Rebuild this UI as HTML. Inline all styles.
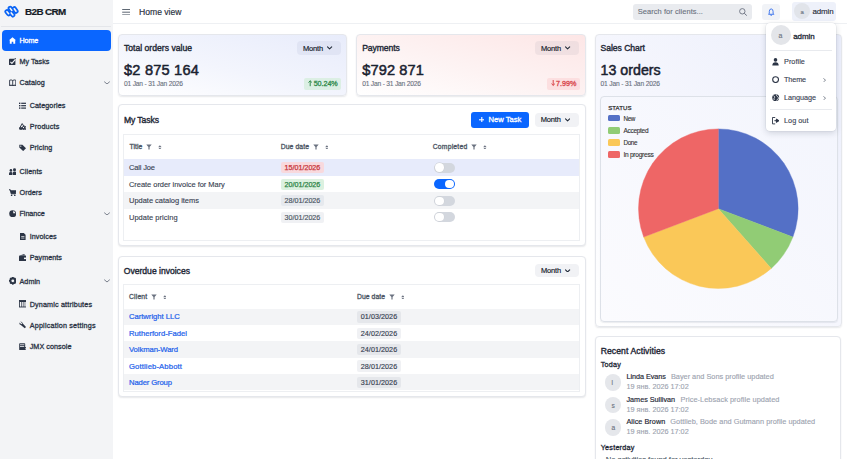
<!DOCTYPE html>
<html><head><meta charset="utf-8"><style>
html,body{margin:0;padding:0;}
body{width:847px;height:459px;overflow:hidden;position:relative;background:#ffffff;font-family:"Liberation Sans",sans-serif;}
.t{position:absolute;white-space:nowrap;}
</style></head><body>
<div style="position:absolute;left:0px;top:0px;width:113.4px;height:459px;background:#f3f4f6;"></div>
<div style="position:absolute;left:1px;top:26px;width:110px;height:1px;background:#e4e6ea;"></div>
<svg style="position:absolute;left:3px;top:3px" width="18" height="17" viewBox="0 0 486 459"><g stroke="#0a64f5" stroke-width="138" stroke-linecap="round"><line x1="108" y1="235" x2="152" y2="290"/><line x1="195" y1="145" x2="238" y2="200"/><line x1="222" y1="268" x2="268" y2="322"/><line x1="305" y1="155" x2="352" y2="222"/></g>
<g stroke="#f3f4f6" stroke-width="42" stroke-linecap="round"><line x1="108" y1="235" x2="152" y2="290"/><line x1="195" y1="145" x2="238" y2="200"/><line x1="222" y1="268" x2="268" y2="322"/><line x1="305" y1="155" x2="352" y2="222"/></g></svg>
<div class="t" style="left:25.00px;top:2.20px;font-size:9.86px;line-height:20px;color:#151b26;font-weight:700;-webkit-text-stroke:0.2px #151b26;letter-spacing:-0.603px;">B2B CRM</div>
<div style="position:absolute;left:1.5px;top:29.5px;width:109px;height:21px;background:#0a66ff;border-radius:4px;"></div>
<svg style="position:absolute;left:9px;top:37px" width="7" height="7" viewBox="0 0 7 7"><path d="M3.5 0.3 L7 3.3 L6.2 3.3 L6.2 6.8 L4.3 6.8 L4.3 4.8 L2.7 4.8 L2.7 6.8 L0.8 6.8 L0.8 3.3 L0 3.3 Z" fill="#fff"/></svg>
<div class="t" style="left:19.50px;top:30.80px;font-size:7.2px;line-height:20px;color:#ffffff;-webkit-text-stroke:0.3px #ffffff;letter-spacing:-0.102px;">Home</div>
<svg style="position:absolute;left:8.7px;top:57.8px" width="7" height="7.4" viewBox="0 0 7 7.4"><rect x="0" y="0.8" width="6.4" height="6.4" rx="0.8" fill="#2b3445"/><path d="M1.4 3.9 L2.9 5.4 L6.6 1.2" stroke="#f3f4f6" stroke-width="1.1" fill="none"/><path d="M5.2 0.2 L7 0.2 L7 1.6" fill="#2b3445"/></svg>
<div class="t" style="left:19.50px;top:52.10px;font-size:7.2px;line-height:20px;color:#2b3445;-webkit-text-stroke:0.3px #2b3445;">My Tasks</div>
<svg style="position:absolute;left:8.7px;top:78.89999999999999px" width="7.4" height="7.4" viewBox="0 0 7.4 7.4"><path d="M0.6 1.2 Q2.2 0.5 3.7 1.5 Q5.2 0.5 6.8 1.2 L6.8 6.4 Q5.2 5.8 3.7 6.6 Q2.2 5.8 0.6 6.4 Z M3.7 1.5 L3.7 6.6 M0.2 6.8 L7.2 6.8" stroke="#2b3445" stroke-width="0.9" fill="none"/></svg>
<div class="t" style="left:19.50px;top:73.20px;font-size:7.2px;line-height:20px;color:#2b3445;-webkit-text-stroke:0.3px #2b3445;letter-spacing:0.081px;">Catalog</div>
<svg style="position:absolute;left:103.8px;top:80.8px" width="6.0" height="3.6" viewBox="0 0 6.0 3.6"><path d="M0.5 0.9 L3.0 3.0 L5.5 0.9" stroke="#6b7280" stroke-width="0.9" fill="none" stroke-linecap="round" stroke-linejoin="round"/></svg>
<svg style="position:absolute;left:18.8px;top:101.5px" width="7.4" height="7.4" viewBox="0 0 7.4 7.4"><g fill="#2b3445"><rect x="0" y="0.6" width="1.4" height="1.4"/><rect x="0" y="3" width="1.4" height="1.4"/><rect x="0" y="5.4" width="1.4" height="1.4"/><rect x="2.2" y="0.7" width="5.2" height="1.2"/><rect x="2.2" y="3.1" width="5.2" height="1.2"/><rect x="2.2" y="5.5" width="5.2" height="1.2"/></g></svg>
<div class="t" style="left:29.70px;top:95.80px;font-size:7.2px;line-height:20px;color:#2b3445;-webkit-text-stroke:0.3px #2b3445;letter-spacing:0.098px;">Categories</div>
<svg style="position:absolute;left:18.8px;top:122.7px" width="7.4" height="7.4" viewBox="0 0 7.4 7.4"><g fill="none" stroke="#2b3445" stroke-width="1"><path d="M3.2 0.6 L6.2 5.6 L0.4 5.6 Z"/><circle cx="5.2" cy="5" r="1.9"/></g><rect x="0.5" y="4.2" width="2.6" height="2.6" fill="#2b3445"/></svg>
<div class="t" style="left:29.70px;top:117.00px;font-size:7.2px;line-height:20px;color:#2b3445;-webkit-text-stroke:0.3px #2b3445;letter-spacing:0.170px;">Products</div>
<svg style="position:absolute;left:18.8px;top:143.9px" width="7.6" height="7.4" viewBox="0 0 7.6 7.4"><path d="M0.3 0.8 L3.4 0.8 L7 4.3 L4.2 7.1 L0.3 3.4 Z" fill="#2b3445"/><circle cx="1.8" cy="2.2" r="0.6" fill="#f3f4f6"/></svg>
<div class="t" style="left:29.70px;top:138.20px;font-size:7.2px;line-height:20px;color:#2b3445;-webkit-text-stroke:0.3px #2b3445;letter-spacing:0.099px;">Pricing</div>
<svg style="position:absolute;left:8.7px;top:167.60000000000002px" width="7.6" height="7.4" viewBox="0 0 7.6 7.4"><g fill="#2b3445"><circle cx="1.9" cy="2.4" r="1.3"/><circle cx="5.5" cy="1.7" r="1.5"/><path d="M0 7.3 L0 5.2 Q0 4 1.9 4 Q3.4 4 3.4 5.2 L3.4 7.3 Z"/><path d="M3.9 7.3 L3.9 4.6 Q3.9 3.5 5.5 3.5 Q7.4 3.5 7.4 4.6 L7.4 7.3 Z"/></g></svg>
<div class="t" style="left:19.50px;top:161.90px;font-size:7.2px;line-height:20px;color:#2b3445;-webkit-text-stroke:0.3px #2b3445;letter-spacing:0.115px;">Clients</div>
<svg style="position:absolute;left:8.7px;top:189.0px" width="7.6" height="7.4" viewBox="0 0 7.6 7.4"><path d="M0 0.8 L1.3 0.8 L2.2 4.8 L6.4 4.8 L7.3 1.8 L1.8 1.8" stroke="#2b3445" stroke-width="1" fill="#2b3445"/><circle cx="2.6" cy="6.4" r="0.8" fill="#2b3445"/><circle cx="5.8" cy="6.4" r="0.8" fill="#2b3445"/></svg>
<div class="t" style="left:19.50px;top:183.30px;font-size:7.2px;line-height:20px;color:#2b3445;-webkit-text-stroke:0.3px #2b3445;letter-spacing:0.079px;">Orders</div>
<svg style="position:absolute;left:8.7px;top:210.0px" width="7.4" height="7.4" viewBox="0 0 7.4 7.4"><circle cx="3.7" cy="3.7" r="3.5" fill="#2b3445"/><path d="M4.2 3.2 L4.2 0.9 A2.6 2.6 0 0 1 6.5 3.2 Z" fill="#f3f4f6"/></svg>
<div class="t" style="left:19.50px;top:204.30px;font-size:7.2px;line-height:20px;color:#2b3445;-webkit-text-stroke:0.3px #2b3445;letter-spacing:-0.053px;">Finance</div>
<svg style="position:absolute;left:103.8px;top:211.89999999999998px" width="6.0" height="3.6" viewBox="0 0 6.0 3.6"><path d="M0.5 0.9 L3.0 3.0 L5.5 0.9" stroke="#6b7280" stroke-width="0.9" fill="none" stroke-linecap="round" stroke-linejoin="round"/></svg>
<svg style="position:absolute;left:19.6px;top:232.60000000000002px" width="6" height="7.4" viewBox="0 0 6 7.4"><path d="M0 0 L3.8 0 L5.6 1.8 L5.6 7.4 L0 7.4 Z" fill="#2b3445"/><rect x="1.2" y="3.2" width="3.2" height="0.7" fill="#f3f4f6"/><rect x="1.2" y="4.7" width="3.2" height="0.7" fill="#f3f4f6"/></svg>
<div class="t" style="left:29.70px;top:226.90px;font-size:7.2px;line-height:20px;color:#2b3445;-webkit-text-stroke:0.3px #2b3445;letter-spacing:0.084px;">Invoices</div>
<svg style="position:absolute;left:18.8px;top:253.8px" width="7.6" height="7.4" viewBox="0 0 7.6 7.4"><rect x="0" y="1.6" width="7.4" height="5.6" rx="0.8" fill="#2b3445"/><path d="M0.6 1.6 L5.4 0 L5.8 1.6" fill="#2b3445"/><rect x="5" y="3.6" width="2.4" height="1.5" fill="#f3f4f6"/></svg>
<div class="t" style="left:29.70px;top:248.10px;font-size:7.2px;line-height:20px;color:#2b3445;-webkit-text-stroke:0.3px #2b3445;letter-spacing:0.027px;">Payments</div>
<svg style="position:absolute;left:8.7px;top:277.2px" width="7.6" height="7.6" viewBox="0 0 7.6 7.6"><g transform="translate(3.8 3.8)"><circle r="2.8" fill="none" stroke="#2b3445" stroke-width="1.4"/><g fill="#2b3445"><rect x="-0.8" y="-3.8" width="1.6" height="7.6"/><rect x="-3.8" y="-0.8" width="7.6" height="1.6"/><rect x="-0.8" y="-3.8" width="1.6" height="7.6" transform="rotate(45)"/><rect x="-0.8" y="-3.8" width="1.6" height="7.6" transform="rotate(-45)"/></g><circle r="1.4" fill="#f3f4f6"/></g></svg>
<div class="t" style="left:19.50px;top:271.50px;font-size:7.2px;line-height:20px;color:#2b3445;-webkit-text-stroke:0.3px #2b3445;letter-spacing:0.048px;">Admin</div>
<svg style="position:absolute;left:103.8px;top:279.09999999999997px" width="6.0" height="3.6" viewBox="0 0 6.0 3.6"><path d="M0.5 0.9 L3.0 3.0 L5.5 0.9" stroke="#6b7280" stroke-width="0.9" fill="none" stroke-linecap="round" stroke-linejoin="round"/></svg>
<svg style="position:absolute;left:18.8px;top:300.2px" width="7.6" height="7.4" viewBox="0 0 7.6 7.4"><rect x="0.4" y="0.4" width="6.8" height="6.6" fill="none" stroke="#2b3445" stroke-width="0.9"/><rect x="0.4" y="0.4" width="6.8" height="1.6" fill="#2b3445"/><g stroke="#2b3445" stroke-width="0.8"><line x1="2.7" y1="1" x2="2.7" y2="7"/><line x1="4.9" y1="1" x2="4.9" y2="7"/></g></svg>
<div class="t" style="left:29.70px;top:294.50px;font-size:7.2px;line-height:20px;color:#2b3445;-webkit-text-stroke:0.3px #2b3445;letter-spacing:0.163px;">Dynamic attributes</div>
<svg style="position:absolute;left:18.8px;top:321.3px" width="7.6" height="7.4" viewBox="0 0 7.6 7.4"><path d="M1.2 0.4 L3.3 2.3 L2.4 3.3 L0.4 1.4 Q0 3.4 1.8 4 L5.8 7.2 L7 6 L3.8 2.6 Q3.4 0.4 1.2 0.4 Z" fill="#2b3445"/></svg>
<div class="t" style="left:29.70px;top:315.60px;font-size:7.2px;line-height:20px;color:#2b3445;-webkit-text-stroke:0.3px #2b3445;letter-spacing:0.203px;">Application settings</div>
<svg style="position:absolute;left:18.8px;top:342.5px" width="7.6" height="7.4" viewBox="0 0 7.6 7.4"><rect x="0.2" y="0.3" width="6" height="7" rx="0.8" fill="#2b3445"/><rect x="1" y="1.4" width="4.4" height="0.8" fill="#f3f4f6"/><rect x="1" y="3" width="4.4" height="0.8" fill="#f3f4f6"/><path d="M5.2 3.6 L7.4 5.2 L5.8 7" stroke="#2b3445" stroke-width="0.9" fill="none"/></svg>
<div class="t" style="left:29.70px;top:336.80px;font-size:7.2px;line-height:20px;color:#2b3445;-webkit-text-stroke:0.3px #2b3445;letter-spacing:0.058px;">JMX console</div>
<div style="position:absolute;left:113px;top:23px;width:734px;height:1px;background:#eef0f3;"></div>
<svg style="position:absolute;left:122px;top:9px" width="8.4" height="6.4" viewBox="0 0 8.4 6.4"><g stroke="#4b5563" stroke-width="0.9"><line x1="0.2" y1="0.5" x2="8.2" y2="0.5"/><line x1="0.2" y1="3.2" x2="8.2" y2="3.2"/><line x1="0.2" y1="5.9" x2="8.2" y2="5.9"/></g></svg>
<div class="t" style="left:139.00px;top:2.40px;font-size:8.6px;line-height:20px;color:#262e3b;-webkit-text-stroke:0.15px #262e3b;">Home view</div>
<div style="position:absolute;left:633px;top:3.5px;width:119px;height:16px;background:#e9ebef;border-radius:3px;"></div>
<div class="t" style="left:637.70px;top:2.40px;font-size:7.49px;line-height:20px;color:#6b7280;-webkit-text-stroke:0.12px #6b7280;letter-spacing:0.060px;">Search for clients...</div>
<svg style="position:absolute;left:739px;top:8px" width="8.5" height="8" viewBox="0 0 8.5 8"><circle cx="3.3" cy="3.3" r="2.7" stroke="#6b7280" stroke-width="0.9" fill="none"/><line x1="5.3" y1="5.3" x2="7.8" y2="7.6" stroke="#6b7280" stroke-width="1"/></svg>
<div style="position:absolute;left:762px;top:3.5px;width:18.3px;height:16px;background:#f1f3f7;border-radius:3px;"></div>
<svg style="position:absolute;left:768.2px;top:7.8px" width="6.4" height="8" viewBox="0 0 6.4 8"><path d="M3.2 0.9 Q1.3 1.1 1.3 3.5 L1.3 5.3 L0.5 6.3 L5.9 6.3 L5.1 5.3 L5.1 3.5 Q5.1 1.1 3.2 0.9 Z" stroke="#2563eb" stroke-width="0.85" fill="none"/><path d="M2.4 7.1 Q3.2 7.9 4.0 7.1" stroke="#2563eb" stroke-width="0.8" fill="none"/></svg>
<div style="position:absolute;left:792px;top:2px;width:44px;height:19px;background:#eef1fa;border-radius:3px;"></div>
<div style="position:absolute;left:794.2px;top:3.2px;width:16px;height:16px;background:#e1e4ea;border-radius:50%;"></div>
<div class="t" style="left:800.40px;top:2.20px;font-size:5.99px;line-height:20px;color:#6b7280;-webkit-text-stroke:0.12px #6b7280;">a</div>
<div class="t" style="left:812.40px;top:2.40px;font-size:8px;line-height:20px;color:#1f2937;-webkit-text-stroke:0.12px #1f2937;letter-spacing:-0.147px;">admin</div>
<div style="position:absolute;border:1px solid #e5e7ec;border-radius:4px;box-shadow:0 1px 1.5px rgba(30,40,60,0.10);box-sizing:border-box;left:118px;top:34px;width:229px;height:61.5px;background:linear-gradient(to top right,#ffffff 0%,#f3f5fd 45%,#e8ecfb 100%);"></div>
<div class="t" style="left:124.00px;top:38.00px;font-size:8.6px;line-height:20px;color:#1f2937;-webkit-text-stroke:0.38px #1f2937;letter-spacing:0.007px;">Total orders value</div>
<div class="t" style="left:124.00px;top:59.90px;font-size:14.6px;line-height:20px;color:#1a2230;-webkit-text-stroke:0.5px #1a2230;letter-spacing:0.203px;">$2 875 164</div>
<div class="t" style="left:124.00px;top:74.20px;font-size:6.69px;line-height:20px;color:#6b7280;-webkit-text-stroke:0.12px #6b7280;letter-spacing:-0.208px;">01 Jan - 31 Jan 2026</div>
<div style="position:absolute;left:297px;top:41.3px;width:44px;height:13.4px;background:rgba(210,216,235,0.45);border-radius:4px;"></div>
<div class="t" style="left:303.00px;top:38.60px;font-size:7.49px;line-height:20px;color:#111827;-webkit-text-stroke:0.15px #111827;letter-spacing:-0.154px;">Month</div>
<svg style="position:absolute;left:327.4px;top:46.300000000000004px" width="5.199999999999999" height="3.6" viewBox="0 0 5.199999999999999 3.6"><path d="M0.5 0.9 L2.5999999999999996 3.0 L4.699999999999999 0.9" stroke="#1f2937" stroke-width="1.05" fill="none" stroke-linecap="round" stroke-linejoin="round"/></svg>
<div style="position:absolute;left:304px;top:78px;width:37px;height:11.5px;background:#dcefe4;border-radius:2px;"></div>
<svg style="position:absolute;left:308.2px;top:80.4px" width="4.4" height="6.2" viewBox="0 0 4.4 6.2"><path d="M2.2 0.8 L2.2 6.2 M0.5 2.5 L2.2 0.8 L3.9 2.5" stroke="#2f8a4b" stroke-width="1.0" fill="none"/></svg>
<div class="t" style="left:313.70px;top:74.40px;font-size:7.2px;line-height:20px;color:#2f8a4b;-webkit-text-stroke:0.3px #2f8a4b;letter-spacing:-0.064px;">50.24%</div>
<div style="position:absolute;border:1px solid #e5e7ec;border-radius:4px;box-shadow:0 1px 1.5px rgba(30,40,60,0.10);box-sizing:border-box;left:356px;top:34px;width:229.70000000000005px;height:61.5px;background:linear-gradient(to top right,#ffffff 0%,#fdf3f3 45%,#fde6e6 100%);"></div>
<div class="t" style="left:362.20px;top:38.00px;font-size:8.6px;line-height:20px;color:#1f2937;-webkit-text-stroke:0.38px #1f2937;letter-spacing:-0.077px;">Payments</div>
<div class="t" style="left:362.20px;top:59.90px;font-size:14.6px;line-height:20px;color:#1a2230;-webkit-text-stroke:0.5px #1a2230;letter-spacing:0.129px;">$792 871</div>
<div class="t" style="left:362.20px;top:74.20px;font-size:6.69px;line-height:20px;color:#6b7280;-webkit-text-stroke:0.12px #6b7280;letter-spacing:-0.214px;">01 Jan - 31 Jan 2026</div>
<div style="position:absolute;left:535px;top:41.3px;width:44px;height:13.4px;background:rgba(225,210,215,0.45);border-radius:4px;"></div>
<div class="t" style="left:541.00px;top:38.60px;font-size:7.49px;line-height:20px;color:#111827;-webkit-text-stroke:0.15px #111827;letter-spacing:-0.154px;">Month</div>
<svg style="position:absolute;left:565.4px;top:46.300000000000004px" width="5.199999999999999" height="3.6" viewBox="0 0 5.199999999999999 3.6"><path d="M0.5 0.9 L2.5999999999999996 3.0 L4.699999999999999 0.9" stroke="#1f2937" stroke-width="1.05" fill="none" stroke-linecap="round" stroke-linejoin="round"/></svg>
<div style="position:absolute;left:547.3px;top:78px;width:32.5px;height:11.5px;background:#fcdfe0;border-radius:2px;"></div>
<svg style="position:absolute;left:551.4px;top:80.4px" width="4.4" height="6.2" viewBox="0 0 4.4 6.2"><path d="M2.2 0 L2.2 5.4 M0.5 3.7 L2.2 5.4 L3.9 3.7" stroke="#d8454a" stroke-width="1.0" fill="none"/></svg>
<div class="t" style="left:555.90px;top:74.40px;font-size:7.2px;line-height:20px;color:#d8454a;-webkit-text-stroke:0.3px #d8454a;">7.99%</div>
<div style="position:absolute;border:1px solid #e5e7ec;border-radius:4px;box-shadow:0 1px 1.5px rgba(30,40,60,0.10);box-sizing:border-box;left:595px;top:33.6px;width:247.29999999999995px;height:293.59999999999997px;background:linear-gradient(to top right,#ffffff 0%,#f5f6fd 50%,#eceffc 100%);"></div>
<div class="t" style="left:600.50px;top:38.00px;font-size:8.6px;line-height:20px;color:#1f2937;-webkit-text-stroke:0.38px #1f2937;letter-spacing:-0.043px;">Sales Chart</div>
<div class="t" style="left:600.50px;top:59.90px;font-size:14.2px;line-height:20px;color:#1a2230;-webkit-text-stroke:0.5px #1a2230;letter-spacing:0.026px;">13 orders</div>
<div class="t" style="left:600.50px;top:74.20px;font-size:6.69px;line-height:20px;color:#6b7280;-webkit-text-stroke:0.12px #6b7280;letter-spacing:-0.177px;">01 Jan - 31 Jan 2026</div>
<div style="position:absolute;left:599.6px;top:95.8px;width:238px;height:226.5px;border:1px solid #dde1e8;border-radius:4px;box-sizing:border-box;background:linear-gradient(to top right,#fbfbfe,#f3f5fd);box-shadow:0 1px 1px rgba(30,40,60,0.08);"></div>
<div class="t" style="left:608.20px;top:97.90px;font-size:6.0px;line-height:20px;color:#333;-webkit-text-stroke:0.25px #333;letter-spacing:0.084px;">STATUS</div>
<div style="position:absolute;left:608.3px;top:114.7px;width:12.2px;height:6.6px;background:#5470c6;border-radius:1.5px;"></div>
<div class="t" style="left:623.40px;top:108.60px;font-size:6.28px;line-height:20px;color:#333;-webkit-text-stroke:0.12px #333;letter-spacing:-0.282px;">New</div>
<div style="position:absolute;left:608.3px;top:126.95px;width:12.2px;height:6.6px;background:#91cc75;border-radius:1.5px;"></div>
<div class="t" style="left:623.40px;top:120.85px;font-size:6.51px;line-height:20px;color:#333;-webkit-text-stroke:0.12px #333;letter-spacing:-0.278px;">Accepted</div>
<div style="position:absolute;left:608.3px;top:139.2px;width:12.2px;height:6.6px;background:#fac858;border-radius:1.5px;"></div>
<div class="t" style="left:623.40px;top:133.10px;font-size:6.29px;line-height:20px;color:#333;-webkit-text-stroke:0.12px #333;letter-spacing:-0.279px;">Done</div>
<div style="position:absolute;left:608.3px;top:151.45px;width:12.2px;height:6.6px;background:#ee6666;border-radius:1.5px;"></div>
<div class="t" style="left:623.40px;top:145.35px;font-size:6.63px;line-height:20px;color:#333;-webkit-text-stroke:0.12px #333;letter-spacing:-0.277px;">In progress</div>
<svg style="position:absolute;left:0;top:0" width="847" height="459"><path d="M718.3 208.7 L718.30 128.90 A79.8 79.8 0 0 1 792.91 237.00 Z" fill="#5470c6" stroke="#5470c6" stroke-width="0.4" stroke-linejoin="round"/><path d="M718.3 208.7 L792.91 237.00 A79.8 79.8 0 0 1 771.22 268.43 Z" fill="#91cc75" stroke="#91cc75" stroke-width="0.4" stroke-linejoin="round"/><path d="M718.3 208.7 L771.22 268.43 A79.8 79.8 0 0 1 643.69 237.00 Z" fill="#fac858" stroke="#fac858" stroke-width="0.4" stroke-linejoin="round"/><path d="M718.3 208.7 L643.69 237.00 A79.8 79.8 0 0 1 718.30 128.90 Z" fill="#ee6666" stroke="#ee6666" stroke-width="0.4" stroke-linejoin="round"/></svg>
<div style="position:absolute;border:1px solid #e5e7ec;border-radius:4px;box-shadow:0 1px 1.5px rgba(30,40,60,0.10);box-sizing:border-box;left:118px;top:103.8px;width:467.5px;height:142.7px;background:#fff;"></div>
<div class="t" style="left:123.90px;top:110.00px;font-size:8.6px;line-height:20px;color:#1f2937;-webkit-text-stroke:0.38px #1f2937;letter-spacing:-0.083px;">My Tasks</div>
<div style="position:absolute;left:471px;top:111.7px;width:57.8px;height:15.9px;background:#0a66ff;border-radius:3px;"></div>
<svg style="position:absolute;left:478.8px;top:116.6px" width="5.6" height="5.6" viewBox="0 0 5.6 5.6"><g stroke="#fff" stroke-width="1.1"><line x1="2.8" y1="0" x2="2.8" y2="5.6"/><line x1="0" y1="2.8" x2="5.6" y2="2.8"/></g></svg>
<div class="t" style="left:488.60px;top:110.20px;font-size:7.6px;line-height:20px;color:#ffffff;-webkit-text-stroke:0.3px #ffffff;">New Task</div>
<div style="position:absolute;left:534.7px;top:112.7px;width:44.3px;height:14.3px;background:#f1f2f5;border-radius:4px;"></div>
<div class="t" style="left:540.70px;top:110.45px;font-size:7.49px;line-height:20px;color:#111827;-webkit-text-stroke:0.15px #111827;letter-spacing:-0.154px;">Month</div>
<svg style="position:absolute;left:565.1px;top:118.14999999999999px" width="5.199999999999999" height="3.6" viewBox="0 0 5.199999999999999 3.6"><path d="M0.5 0.9 L2.5999999999999996 3.0 L4.699999999999999 0.9" stroke="#1f2937" stroke-width="1.05" fill="none" stroke-linecap="round" stroke-linejoin="round"/></svg>
<div style="position:absolute;left:123.3px;top:134.3px;width:456.5px;height:107px;border:1px solid #edeff2;box-sizing:border-box;background:#fff;"></div>
<div class="t" style="left:129.40px;top:136.90px;font-size:6.8px;line-height:20px;color:#4b5563;-webkit-text-stroke:0.3px #4b5563;letter-spacing:0.101px;">Title</div>
<svg style="position:absolute;left:146.4px;top:143.6px" width="6" height="6" viewBox="0 0 6 6"><path d="M0.3 0.6 L5.7 0.6 L3.6 3 L3.6 5.6 L2.4 5.6 L2.4 3 Z" fill="#6b7280"/></svg>
<svg style="position:absolute;left:158.0px;top:144.6px" width="3.8" height="4.8" viewBox="0 0 3.8 4.8"><path d="M1.9 0.3 L3.5 2.1 L0.3 2.1 Z M1.9 4.5 L3.5 2.7 L0.3 2.7 Z" fill="#6b7280"/></svg>
<div class="t" style="left:280.70px;top:136.90px;font-size:6.8px;line-height:20px;color:#4b5563;-webkit-text-stroke:0.3px #4b5563;letter-spacing:0.100px;">Due date</div>
<svg style="position:absolute;left:313px;top:143.6px" width="6" height="6" viewBox="0 0 6 6"><path d="M0.3 0.6 L5.7 0.6 L3.6 3 L3.6 5.6 L2.4 5.6 L2.4 3 Z" fill="#6b7280"/></svg>
<svg style="position:absolute;left:324.7px;top:144.6px" width="3.8" height="4.8" viewBox="0 0 3.8 4.8"><path d="M1.9 0.3 L3.5 2.1 L0.3 2.1 Z M1.9 4.5 L3.5 2.7 L0.3 2.7 Z" fill="#6b7280"/></svg>
<div class="t" style="left:432.70px;top:136.90px;font-size:6.8px;line-height:20px;color:#4b5563;-webkit-text-stroke:0.3px #4b5563;letter-spacing:0.202px;">Completed</div>
<svg style="position:absolute;left:471px;top:143.6px" width="6" height="6" viewBox="0 0 6 6"><path d="M0.3 0.6 L5.7 0.6 L3.6 3 L3.6 5.6 L2.4 5.6 L2.4 3 Z" fill="#6b7280"/></svg>
<svg style="position:absolute;left:483.0px;top:144.6px" width="3.8" height="4.8" viewBox="0 0 3.8 4.8"><path d="M1.9 0.3 L3.5 2.1 L0.3 2.1 Z M1.9 4.5 L3.5 2.7 L0.3 2.7 Z" fill="#6b7280"/></svg>
<div style="position:absolute;left:124.3px;top:159.2px;width:454.5px;height:16.6px;background:#e7ebfb;"></div>
<div class="t" style="left:129.00px;top:158.10px;font-size:7.49px;line-height:20px;color:#374151;-webkit-text-stroke:0.12px #374151;letter-spacing:-0.151px;">Call Joe</div>
<div style="position:absolute;left:280.7px;top:161.9px;width:43.5px;height:11.3px;background:#f8d9dd;border-radius:2px;"></div>
<div class="t" style="left:284.50px;top:158.10px;font-size:7.17px;line-height:20px;color:#c8363c;-webkit-text-stroke:0.25px #c8363c;">15/01/2026</div>
<div style="position:absolute;left:434.4px;top:162.5px;width:20.2px;height:10.2px;background:#d3d7de;border-radius:5.1px;"></div>
<div style="position:absolute;left:435.3px;top:163.3px;width:8.4px;height:8.4px;background:#fff;border-radius:50%;box-shadow:0 0 0 0.4px #c9ccd2;"></div>
<div style="position:absolute;left:124.3px;top:175.8px;width:454.5px;height:16.6px;background:#ffffff;"></div>
<div class="t" style="left:129.00px;top:174.70px;font-size:7.49px;line-height:20px;color:#374151;-webkit-text-stroke:0.12px #374151;letter-spacing:-0.039px;">Create order invoice for Mary</div>
<div style="position:absolute;left:280.7px;top:178.5px;width:43.5px;height:11.3px;background:#dcf1e0;border-radius:2px;"></div>
<div class="t" style="left:284.50px;top:174.70px;font-size:7.17px;line-height:20px;color:#2c8446;-webkit-text-stroke:0.25px #2c8446;">20/01/2026</div>
<div style="position:absolute;left:434.4px;top:179.1px;width:20.2px;height:10.2px;background:#0a66ff;border-radius:5.1px;"></div>
<div style="position:absolute;left:445.2px;top:180.0px;width:8.4px;height:8.4px;background:#fff;border-radius:50%;"></div>
<div style="position:absolute;left:124.3px;top:192.4px;width:454.5px;height:16.6px;background:#f3f4f6;"></div>
<div class="t" style="left:129.00px;top:191.30px;font-size:7.49px;line-height:20px;color:#374151;-webkit-text-stroke:0.12px #374151;letter-spacing:-0.019px;">Update catalog items</div>
<div style="position:absolute;left:280.7px;top:195.1px;width:43.5px;height:11.3px;background:#e6e9ee;border-radius:2px;"></div>
<div class="t" style="left:284.50px;top:191.30px;font-size:7.17px;line-height:20px;color:#4b5563;-webkit-text-stroke:0.15px #4b5563;">28/01/2026</div>
<div style="position:absolute;left:434.4px;top:195.7px;width:20.2px;height:10.2px;background:#d3d7de;border-radius:5.1px;"></div>
<div style="position:absolute;left:435.3px;top:196.5px;width:8.4px;height:8.4px;background:#fff;border-radius:50%;box-shadow:0 0 0 0.4px #c9ccd2;"></div>
<div style="position:absolute;left:124.3px;top:209.0px;width:454.5px;height:16.6px;background:#ffffff;"></div>
<div class="t" style="left:129.00px;top:207.90px;font-size:7.49px;line-height:20px;color:#374151;-webkit-text-stroke:0.12px #374151;letter-spacing:0.023px;">Update pricing</div>
<div style="position:absolute;left:280.7px;top:211.7px;width:43.5px;height:11.3px;background:#f0f1f4;border-radius:2px;"></div>
<div class="t" style="left:284.50px;top:207.90px;font-size:7.17px;line-height:20px;color:#4b5563;-webkit-text-stroke:0.15px #4b5563;">30/01/2026</div>
<div style="position:absolute;left:434.4px;top:212.3px;width:20.2px;height:10.2px;background:#d3d7de;border-radius:5.1px;"></div>
<div style="position:absolute;left:435.3px;top:213.1px;width:8.4px;height:8.4px;background:#fff;border-radius:50%;box-shadow:0 0 0 0.4px #c9ccd2;"></div>
<div style="position:absolute;border:1px solid #e5e7ec;border-radius:4px;box-shadow:0 1px 1.5px rgba(30,40,60,0.10);box-sizing:border-box;left:118px;top:256.2px;width:467.5px;height:141.10000000000002px;background:#fff;"></div>
<div class="t" style="left:123.80px;top:261.20px;font-size:8.6px;line-height:20px;color:#1f2937;-webkit-text-stroke:0.38px #1f2937;letter-spacing:-0.016px;">Overdue invoices</div>
<div style="position:absolute;left:535px;top:263.6px;width:44px;height:13.8px;background:#f1f2f5;border-radius:4px;"></div>
<div class="t" style="left:541.00px;top:261.10px;font-size:7.49px;line-height:20px;color:#111827;-webkit-text-stroke:0.15px #111827;letter-spacing:-0.154px;">Month</div>
<svg style="position:absolute;left:565.4px;top:268.8px" width="5.199999999999999" height="3.6" viewBox="0 0 5.199999999999999 3.6"><path d="M0.5 0.9 L2.5999999999999996 3.0 L4.699999999999999 0.9" stroke="#1f2937" stroke-width="1.05" fill="none" stroke-linecap="round" stroke-linejoin="round"/></svg>
<div style="position:absolute;left:123.3px;top:284.2px;width:456.5px;height:108px;border:1px solid #edeff2;box-sizing:border-box;background:#fff;"></div>
<div class="t" style="left:129.00px;top:286.90px;font-size:6.8px;line-height:20px;color:#4b5563;-webkit-text-stroke:0.3px #4b5563;letter-spacing:0.163px;">Client</div>
<svg style="position:absolute;left:150.8px;top:293.6px" width="6" height="6" viewBox="0 0 6 6"><path d="M0.3 0.6 L5.7 0.6 L3.6 3 L3.6 5.6 L2.4 5.6 L2.4 3 Z" fill="#6b7280"/></svg>
<svg style="position:absolute;left:162.5px;top:294.6px" width="3.8" height="4.8" viewBox="0 0 3.8 4.8"><path d="M1.9 0.3 L3.5 2.1 L0.3 2.1 Z M1.9 4.5 L3.5 2.7 L0.3 2.7 Z" fill="#6b7280"/></svg>
<div class="t" style="left:357.00px;top:286.90px;font-size:6.8px;line-height:20px;color:#4b5563;-webkit-text-stroke:0.3px #4b5563;letter-spacing:0.057px;">Due date</div>
<svg style="position:absolute;left:389px;top:293.6px" width="6" height="6" viewBox="0 0 6 6"><path d="M0.3 0.6 L5.7 0.6 L3.6 3 L3.6 5.6 L2.4 5.6 L2.4 3 Z" fill="#6b7280"/></svg>
<svg style="position:absolute;left:400.7px;top:294.6px" width="3.8" height="4.8" viewBox="0 0 3.8 4.8"><path d="M1.9 0.3 L3.5 2.1 L0.3 2.1 Z M1.9 4.5 L3.5 2.7 L0.3 2.7 Z" fill="#6b7280"/></svg>
<div style="position:absolute;left:124.3px;top:308.7px;width:454.5px;height:16.36px;background:#f3f4f6;"></div>
<div class="t" style="left:129.00px;top:307.48px;font-size:7.7px;line-height:20px;color:#2563eb;-webkit-text-stroke:0.22px #2563eb;letter-spacing:-0.042px;">Cartwright LLC</div>
<div style="position:absolute;left:357px;top:311.18px;width:44px;height:11.5px;background:#e5e7eb;border-radius:2px;"></div>
<div class="t" style="left:360.80px;top:307.48px;font-size:7.17px;line-height:20px;color:#374151;-webkit-text-stroke:0.15px #374151;letter-spacing:0.057px;">01/03/2026</div>
<div style="position:absolute;left:124.3px;top:325.06px;width:454.5px;height:16.36px;background:#ffffff;"></div>
<div class="t" style="left:129.00px;top:323.84px;font-size:7.7px;line-height:20px;color:#2563eb;-webkit-text-stroke:0.22px #2563eb;letter-spacing:-0.014px;">Rutherford-Fadel</div>
<div style="position:absolute;left:357px;top:327.54px;width:44px;height:11.5px;background:#f0f1f4;border-radius:2px;"></div>
<div class="t" style="left:360.80px;top:323.84px;font-size:7.17px;line-height:20px;color:#374151;-webkit-text-stroke:0.15px #374151;letter-spacing:0.057px;">24/02/2026</div>
<div style="position:absolute;left:124.3px;top:341.42px;width:454.5px;height:16.36px;background:#f3f4f6;"></div>
<div class="t" style="left:129.00px;top:340.20px;font-size:7.7px;line-height:20px;color:#2563eb;-webkit-text-stroke:0.22px #2563eb;letter-spacing:-0.092px;">Volkman-Ward</div>
<div style="position:absolute;left:357px;top:343.9px;width:44px;height:11.5px;background:#e5e7eb;border-radius:2px;"></div>
<div class="t" style="left:360.80px;top:340.20px;font-size:7.17px;line-height:20px;color:#374151;-webkit-text-stroke:0.15px #374151;letter-spacing:0.057px;">24/01/2026</div>
<div style="position:absolute;left:124.3px;top:357.78px;width:454.5px;height:16.36px;background:#ffffff;"></div>
<div class="t" style="left:129.00px;top:356.56px;font-size:7.7px;line-height:20px;color:#2563eb;-webkit-text-stroke:0.22px #2563eb;letter-spacing:0.117px;">Gottlieb-Abbott</div>
<div style="position:absolute;left:357px;top:360.26px;width:44px;height:11.5px;background:#f0f1f4;border-radius:2px;"></div>
<div class="t" style="left:360.80px;top:356.56px;font-size:7.17px;line-height:20px;color:#374151;-webkit-text-stroke:0.15px #374151;letter-spacing:0.057px;">28/01/2026</div>
<div style="position:absolute;left:124.3px;top:374.14px;width:454.5px;height:16.36px;background:#f3f4f6;"></div>
<div class="t" style="left:129.00px;top:372.92px;font-size:7.7px;line-height:20px;color:#2563eb;-webkit-text-stroke:0.22px #2563eb;letter-spacing:-0.151px;">Nader Group</div>
<div style="position:absolute;left:357px;top:376.62px;width:44px;height:11.5px;background:#e5e7eb;border-radius:2px;"></div>
<div class="t" style="left:360.80px;top:372.92px;font-size:7.17px;line-height:20px;color:#374151;-webkit-text-stroke:0.15px #374151;letter-spacing:0.057px;">31/01/2026</div>
<div style="position:absolute;border:1px solid #e5e7ec;border-radius:4px;box-shadow:0 1px 1.5px rgba(30,40,60,0.10);box-sizing:border-box;left:595px;top:336.2px;width:246.39999999999998px;height:133.8px;background:#fff;"></div>
<div class="t" style="left:600.70px;top:340.90px;font-size:8.6px;line-height:20px;color:#1f2937;-webkit-text-stroke:0.38px #1f2937;letter-spacing:0.088px;">Recent Activities</div>
<div class="t" style="left:600.70px;top:355.10px;font-size:7.2px;line-height:20px;color:#1f2937;-webkit-text-stroke:0.3px #1f2937;letter-spacing:0.247px;">Today</div>
<div style="position:absolute;left:604.9px;top:374.0px;width:16.5px;height:16.5px;background:#e5e7eb;border-radius:50%;"></div>
<div class="t" style="left:611.40px;top:372.80px;font-size:6.63px;line-height:20px;color:#6b7280;-webkit-text-stroke:0.12px #6b7280;">l</div>
<div class="t" style="left:626.50px;top:366.90px;font-size:7.22px;line-height:20px;color:#1f2937;-webkit-text-stroke:0.18px #1f2937;letter-spacing:-0.044px;">Linda Evans</div>
<div class="t" style="left:670.90px;top:366.90px;font-size:7.38px;line-height:20px;color:#9ca3af;-webkit-text-stroke:0.12px #9ca3af;letter-spacing:-0.014px;">Bayer and Sons profile updated</div>
<div class="t" style="left:626.50px;top:376.70px;font-size:7.28px;line-height:20px;color:#9ca3af;-webkit-text-stroke:0.12px #9ca3af;letter-spacing:-0.008px;">19 янв. 2026 17:02</div>
<div style="position:absolute;left:604.9px;top:396.8px;width:16.5px;height:16.5px;background:#e5e7eb;border-radius:50%;"></div>
<div class="t" style="left:611.40px;top:395.60px;font-size:6.63px;line-height:20px;color:#6b7280;-webkit-text-stroke:0.12px #6b7280;">s</div>
<div class="t" style="left:626.50px;top:389.70px;font-size:7.22px;line-height:20px;color:#1f2937;-webkit-text-stroke:0.18px #1f2937;">James Sullivan</div>
<div class="t" style="left:680.50px;top:389.70px;font-size:7.38px;line-height:20px;color:#9ca3af;-webkit-text-stroke:0.12px #9ca3af;letter-spacing:0.049px;">Price-Lebsack profile updated</div>
<div class="t" style="left:626.50px;top:399.50px;font-size:7.28px;line-height:20px;color:#9ca3af;-webkit-text-stroke:0.12px #9ca3af;letter-spacing:-0.008px;">19 янв. 2026 17:02</div>
<div style="position:absolute;left:604.9px;top:419.1px;width:16.5px;height:16.5px;background:#e5e7eb;border-radius:50%;"></div>
<div class="t" style="left:611.40px;top:417.90px;font-size:6.63px;line-height:20px;color:#6b7280;-webkit-text-stroke:0.12px #6b7280;">a</div>
<div class="t" style="left:626.50px;top:412.00px;font-size:7.22px;line-height:20px;color:#1f2937;-webkit-text-stroke:0.18px #1f2937;letter-spacing:0.058px;">Alice Brown</div>
<div class="t" style="left:670.30px;top:412.00px;font-size:7.38px;line-height:20px;color:#9ca3af;-webkit-text-stroke:0.12px #9ca3af;letter-spacing:0.012px;">Gottlieb, Bode and Gutmann profile updated</div>
<div class="t" style="left:626.50px;top:421.80px;font-size:7.28px;line-height:20px;color:#9ca3af;-webkit-text-stroke:0.12px #9ca3af;letter-spacing:-0.008px;">19 янв. 2026 17:02</div>
<div class="t" style="left:600.70px;top:438.00px;font-size:7.2px;line-height:20px;color:#1f2937;-webkit-text-stroke:0.3px #1f2937;letter-spacing:0.243px;">Yesterday</div>
<div class="t" style="left:605.70px;top:450.20px;font-size:7.7px;line-height:20px;color:#4b5563;-webkit-text-stroke:0.12px #4b5563;letter-spacing:-0.089px;">No activities found for yesterday</div>
<div style="position:absolute;left:766.4px;top:22.8px;width:69.2px;height:108.4px;background:#fff;border-radius:4px;box-shadow:0 2px 6px rgba(20,30,50,0.16),0 0 0 0.6px rgba(20,30,50,0.07);"></div>
<div style="position:absolute;left:770.6px;top:25.3px;width:20px;height:20px;background:#e3e5e9;border-radius:50%;"></div>
<div class="t" style="left:778.40px;top:26.10px;font-size:6.96px;line-height:20px;color:#6b7280;-webkit-text-stroke:0.12px #6b7280;">a</div>
<div class="t" style="left:793.20px;top:26.80px;font-size:8.0px;line-height:20px;color:#1f2937;-webkit-text-stroke:0.3px #1f2937;letter-spacing:-0.097px;">admin</div>
<div style="position:absolute;left:770px;top:50.2px;width:62px;height:0.7px;background:#e8eaee;"></div>
<svg style="position:absolute;left:772.2px;top:58px" width="7" height="7.6" viewBox="0 0 7 7.6"><circle cx="3.5" cy="1.9" r="1.8" fill="#2b3445"/><path d="M0.3 7.6 Q0.3 4.2 3.5 4.2 Q6.7 4.2 6.7 7.6 Z" fill="#2b3445"/></svg>
<div class="t" style="left:784.00px;top:52.00px;font-size:7.28px;line-height:20px;color:#374151;-webkit-text-stroke:0.12px #374151;letter-spacing:0.044px;">Profile</div>
<svg style="position:absolute;left:772.2px;top:76.3px" width="7.2" height="7.2" viewBox="0 0 7.2 7.2"><circle cx="3.6" cy="3.6" r="2.9" stroke="#2b3445" stroke-width="1.1" fill="none"/></svg>
<div class="t" style="left:784.00px;top:69.80px;font-size:7.28px;line-height:20px;color:#374151;-webkit-text-stroke:0.12px #374151;letter-spacing:-0.114px;">Theme</div>
<svg style="position:absolute;left:823.4px;top:77.8px" width="3.2" height="4.4" viewBox="0 0 3.2 4.4"><path d="M0.4 0.4 L2.6 2.2 L0.4 4" stroke="#6b7280" stroke-width="0.8" fill="none"/></svg>
<svg style="position:absolute;left:772.2px;top:94px" width="7.4" height="7.4" viewBox="0 0 7.4 7.4"><circle cx="3.7" cy="3.7" r="3.5" fill="#2b3445"/><path d="M1.4 1.6 Q2.8 2.2 2.6 3.6 Q1.6 4.4 2.2 6 M4.6 0.6 Q4.2 2 5.4 2.6 Q6.8 3 6.4 4.8 Q5 5.2 4.6 6.6" stroke="#fff" stroke-width="0.8" fill="none"/></svg>
<div class="t" style="left:784.00px;top:87.50px;font-size:7.28px;line-height:20px;color:#374151;-webkit-text-stroke:0.12px #374151;letter-spacing:-0.042px;">Language</div>
<svg style="position:absolute;left:823.4px;top:95.5px" width="3.2" height="4.4" viewBox="0 0 3.2 4.4"><path d="M0.4 0.4 L2.6 2.2 L0.4 4" stroke="#6b7280" stroke-width="0.8" fill="none"/></svg>
<div style="position:absolute;left:770px;top:109.3px;width:62px;height:0.7px;background:#e8eaee;"></div>
<svg style="position:absolute;left:772.4px;top:117.4px" width="7.4" height="7.4" viewBox="0 0 7.4 7.4"><path d="M3.2 0.5 L0.5 0.5 L0.5 6.9 L3.2 6.9" stroke="#2b3445" stroke-width="0.9" fill="none"/><path d="M2.4 3.7 L5.2 3.7 M4.4 2 L7 3.7 L4.4 5.4 Z" stroke="#2b3445" stroke-width="1" fill="#2b3445"/></svg>
<div class="t" style="left:784.00px;top:111.10px;font-size:7.28px;line-height:20px;color:#374151;-webkit-text-stroke:0.12px #374151;letter-spacing:0.035px;">Log out</div>
</body></html>
